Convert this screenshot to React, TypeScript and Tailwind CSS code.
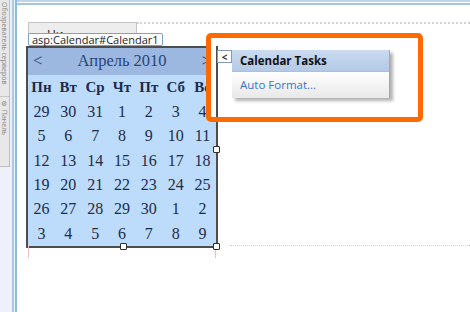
import { FC } from "react";

const dayNames = ["Пн", "Вт", "Ср", "Чт", "Пт", "Сб", "Вс"];

const weeks = [
  [29, 30, 31, 1, 2, 3, 4],
  [5, 6, 7, 8, 9, 10, 11],
  [12, 13, 14, 15, 16, 17, 18],
  [19, 20, 21, 22, 23, 24, 25],
  [26, 27, 28, 29, 30, 1, 2],
  [3, 4, 5, 6, 7, 8, 9],
];

const Handle: FC<{ className: string }> = ({ className }) => (
  <div
    className={`absolute z-10 h-[7px] w-[7px] rounded-[1px] border border-[#2e2e2e] bg-white ${className}`}
  />
);

const Calendar = () => {
  return (
    <div className="relative ml-[9px] h-[202px] w-[192px] shrink-0 border-2 border-[#4d4d4d]">
      <div className="flex h-full flex-col overflow-hidden bg-[#bddbfb] font-['Liberation_Serif',serif] text-[#1d2b4c]">
        <div className="flex h-[27px] shrink-0 items-center justify-between bg-[#9cb8e0] px-[5px] text-[16.5px] text-[#2a4576]">
          <span>&lt;</span>
          <span>Апрель 2010</span>
          <span>&gt;</span>
        </div>
        <div className="grid flex-1 grid-cols-7 grid-rows-[25px_repeat(6,1fr)]">
          {dayNames.map((d) => (
            <div key={d} className="flex items-center justify-center whitespace-nowrap text-[15px] font-bold">
              {d}
            </div>
          ))}
          {weeks.flat().map((n, i) => (
            <div key={i} className="flex items-center justify-center text-[16px]">
              {n}
            </div>
          ))}
        </div>
      </div>
      {/* selection handles */}
      <Handle className="-right-[4px] top-[98px]" />
      <Handle className="-bottom-[4px] left-[92px]" />
      <Handle className="-bottom-[4px] -right-[4px]" />
      {/* guide ticks */}
      <div className="absolute left-[0px] top-full h-[12px] w-px bg-[#efc0c0]" />
      <div className="absolute right-[0px] top-full h-[12px] w-px bg-[#efc0c0]" />
    </div>
  );
};

export default function App() {
  return (
    <div className="relative flex h-[312px] w-[470px] overflow-hidden bg-white font-['Open_Sans',sans-serif]">
      {/* docked tool windows */}
      <div className="flex w-[12px] shrink-0 flex-col bg-[#eef0fb]">
        <div className="flex h-[167px] w-[10px] flex-col overflow-hidden border-b border-r border-[#bdbdbd] bg-[#e8e8e8] text-[7px] leading-[9px] text-[#8a8a8a]">
          <div className="h-[97px] overflow-hidden border-b border-[#c6c6c6] pt-[2px] [writing-mode:vertical-rl]">
            Обозреватель серверов
          </div>
          <div className="flex-1 overflow-hidden pt-[3px] [writing-mode:vertical-rl]">
            ⚙ Панель элементов
          </div>
        </div>
      </div>
      <div className="w-[5px] shrink-0 border-l-2 border-r-2 border-l-[#a9cae6] border-r-[#8fbbdf] bg-[#eef4fa]" />

      {/* design surface */}
      <div className="flex min-w-0 flex-1 flex-col">
        <div className="h-[5px] border-b-2 border-t-2 border-b-[#a6c4e0] border-t-[#bcd5eb]" />
        <div className="mt-[17px] flex">
          <div className="ml-[11px] h-[12px] w-[109px] overflow-hidden border-l border-r border-t border-[#c4c4c4] bg-[#ededed] pl-[18px] pt-[5px] text-[12px] leading-[14px] text-[#222]">
            Ни
          </div>
          <div className="flex-1 border-t-2 border-dotted border-[#d4d4d4]" />
        </div>
        <div className="relative z-10 -mt-[1px] ml-[11px] flex h-[13px] items-center self-start rounded-[2px] border border-[#7e9fd3] bg-white px-[3px] text-[11px] leading-[11px] text-[#1e1e1e]">
          asp:Calendar#Calendar1
        </div>
        <div className="flex items-end">
          <Calendar />
          <div className="mb-[2px] ml-[12px] flex-1 border-b border-dotted border-[#cfcfcf]" />
        </div>
      </div>

      {/* smart tag */}
      <div className="absolute left-[217px] top-[50px] z-20 flex h-[13px] w-[15px] items-center justify-center border border-[#8899b5] bg-white text-[10px] font-bold leading-none text-[#333]">
        &lt;
      </div>
      <div className="absolute left-[232px] top-[50px] z-20 w-[158px] border-r border-[#a6a6a6] shadow-[3px_3px_3px_rgba(0,0,0,0.3)]">
        <div className="flex h-[22px] items-center border-b border-[#a9bfdc] bg-gradient-to-b from-[#cadbf0] to-[#b3c9e5] pl-[8px] text-[11.5px] font-bold text-[#111]">
          Calendar Tasks
        </div>
        <div className="flex h-[26px] items-center bg-gradient-to-b from-white to-[#e8e8e8] pl-[8px] text-[11.5px] text-[#3a73cf]">
          Auto Format...
        </div>
      </div>

      {/* annotation */}
      <div className="absolute left-[206px] top-[33px] z-30 h-[89px] w-[217px] rounded-[5px] border-[5px] border-[#ff6a00] shadow-[inset_5px_0_0_#fff]" />
    </div>
  );
}
